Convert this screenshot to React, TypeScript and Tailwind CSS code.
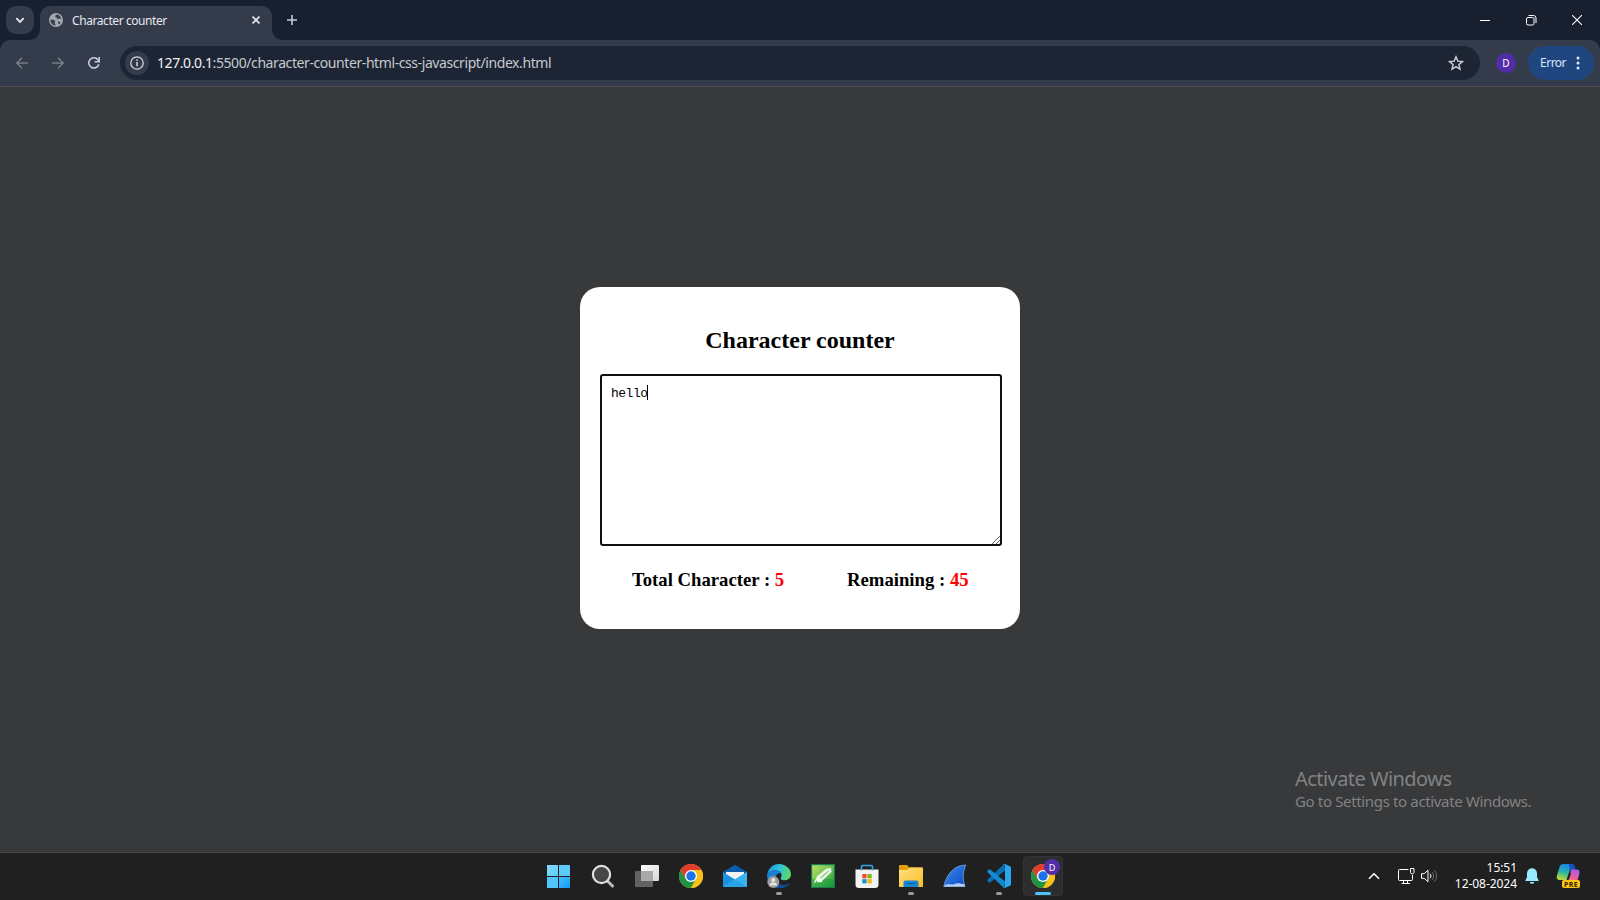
import type { ReactNode } from "react";

function ChromeLogo() {
  return (
    <svg viewBox="0 0 24 24" className="size-6">
      <circle cx="12" cy="12" r="12" fill="#fbc116" />
      <path d="M1.600 6A12 12 0 0 0 12 24L17.200 15 12 12 6.800 15z" fill="#229342" />
      <path d="M1.600 6A12 12 0 0 1 22.400 6H12L6.800 15z" fill="#e33b2e" />
      <path d="M22.400 6A12 12 0 0 1 12 24L17.200 15 12 6z" fill="#fbc116" />
      <circle cx="12" cy="12" r="6" fill="#fff" />
      <circle cx="12" cy="12" r="4.700" fill="#1a73e8" />
    </svg>
  );
}

function WindowsLogo() {
  return (
    <svg viewBox="0 0 24 24" className="size-6">
      <defs>
        <linearGradient id="win" x1="0" y1="0" x2="1" y2="1">
          <stop offset="0" stopColor="#86dcfb" />
          <stop offset="1" stopColor="#5accfa" />
        </linearGradient>
        <linearGradient id="win2" x1="0" y1="0" x2="1" y2="1">
          <stop offset="0" stopColor="#43bdf9" />
          <stop offset="1" stopColor="#149df5" />
        </linearGradient>
      </defs>
      <path d="M0 1h11v11H0z" fill="url(#win)" />
      <path d="M12 1h11v11H12z" fill="#5acbfa" />
      <path d="M0 13h11v11H0z" fill="#50c5f9" />
      <path d="M12 13h11v11H12z" fill="url(#win2)" />
    </svg>
  );
}

function SearchIcon() {
  return (
    <svg viewBox="0 0 24 24" className="size-6">
      <path d="M16.500 17L21.500 22" stroke="#b9bec2" strokeWidth="3" strokeLinecap="round" />
      <circle cx="10.500" cy="10.500" r="8.600" fill="#464646" stroke="#dfe2e4" strokeWidth="2.200" />
    </svg>
  );
}

function TaskViewIcon() {
  return (
    <svg viewBox="0 0 24 24" className="size-6">
      <defs>
        <linearGradient id="tv" x1="0" y1="0" x2="1" y2="1">
          <stop offset="0" stopColor="#ffffff" />
          <stop offset="1" stopColor="#d5d5d5" />
        </linearGradient>
      </defs>
      <rect x="6" y="1" width="18" height="16" rx="1" fill="url(#tv)" />
      <rect x="0" y="7" width="18" height="16" rx="1" fill="#626262" />
      <path d="M6 7h12v10H6z" fill="#a9a9a9" />
    </svg>
  );
}

function MailIcon() {
  return (
    <svg viewBox="0 0 24 24" className="size-6">
      <path d="M0 8L12 .8 24 8v4H0z" fill="#0b5cab" />
      <path d="M3 8h18v8H3z" fill="#f1f3f5" />
      <path d="M0 8l12 7.500L24 8v15H0z" fill="#1a93df" />
      <path d="M24 8v15H0l12-7.500z" fill="#36b5ef" />
      <path d="M12 15.500L24 23H0z" fill="#2aa4e8" />
    </svg>
  );
}

function EdgeIcon() {
  return (
    <svg viewBox="0 0 24 24" className="size-6">
      <defs>
        <linearGradient id="edge" x1="0" y1=".3" x2="1" y2=".5">
          <stop offset="0" stopColor="#1f9de0" />
          <stop offset=".5" stopColor="#31c2dc" />
          <stop offset="1" stopColor="#5fd95d" />
        </linearGradient>
      </defs>
      <path d="M.3 11C1 4.500 6 0 12 0s12 4.500 12 10c0 4-3 6.300-6.600 6.300-3 0-4.400-1.300-3.400-2.800C16 10 13 6.500 8.500 6.500 4.500 6.500 1.200 8.500.3 11z" fill="url(#edge)" />
      <path d="M.1 12C.1 8 4 6.400 8.500 6.400c-3.600 2-4.800 6-3.200 9.600C7 20 12 22 17 21.300c2-.3 3.500-1.200 4.800-1.800.5-.2.800.2.500.6C20 22.800 16.500 24 12.500 24 5.500 24 .1 19 .1 12z" fill="#136cc4" />
      <path d="M.1 12C.1 8 4 6.400 8.500 6.400c2.500 0 4.300 1 5.300 2.500-4 0-6 3.500-4.800 7L5 18z" fill="#1a7fd2" />
      <path d="M8.500 11c-1.400 5 2.500 9.300 8.500 10.100 2.500-.3 4.500-1.300 5-1.400-1.500 2.600-5 4.300-9.500 4.300-5 0-7.500-6-4-13z" fill="#104a93" />
      <circle cx="6.300" cy="18" r="6" fill="#9c9c9c" />
      <circle cx="6.300" cy="16" r="2.100" fill="#e4e4e4" />
      <path d="M2.500 21.500c0-4.500 7.600-4.500 7.600 0z" fill="#e4e4e4" />
    </svg>
  );
}

function GreenPenIcon() {
  return (
    <svg viewBox="0 0 24 24" className="size-6">
      <defs>
        <linearGradient id="pen" x1="0" y1="0" x2="1" y2="1">
          <stop offset="0" stopColor="#c3e36a" />
          <stop offset=".5" stopColor="#6ec04e" />
          <stop offset="1" stopColor="#159c3c" />
        </linearGradient>
      </defs>
      <rect x=".6" y=".6" width="22.800" height="22.800" fill="url(#pen)" stroke="#167c52" strokeWidth="1.200" />
      <path d="M1.500 15h21v7.500h-21z" fill="#119a3e" fillOpacity=".5" />
      <path d="M5.500 12.500L15.500 4.500l4.500-.5.500 4-9.500 9-5 1.500z" fill="#e7f5e3" />
      <path d="M9 14.500l8.500-7.500" stroke="#5fae62" strokeWidth="1" />
      <path d="M3.500 18.500c1-2.500 3-4 4.500-4.500s1.500 1.500 0 2.500 1 1.500 3 .5" stroke="#f4fff0" strokeWidth="1.500" fill="none" />
    </svg>
  );
}

function StoreIcon() {
  return (
    <svg viewBox="0 0 24 24" className="size-6">
      <path d="M.5 5.500h23v15a3.500 3.500 0 0 1-3.500 3.500H4a3.500 3.500 0 0 1-3.500-3.500z" fill="#f2f2f2" />
      <path d="M6.500 6.500V2.700c0-.7.500-1.200 1.200-1.200h8.600c.7 0 1.200.5 1.200 1.200v3.800" fill="none" stroke="#2fa8e6" strokeWidth="1.600" />
      <path d="M7.300 10h4.300v4.300H7.300z" fill="#f04e23" />
      <path d="M12.400 10h4.300v4.300h-4.300z" fill="#7db912" />
      <path d="M7.300 15.100h4.300v4.300H7.300z" fill="#1296dc" />
      <path d="M12.400 15.100h4.300v4.300h-4.300z" fill="#f9b50b" />
    </svg>
  );
}

function ExplorerIcon() {
  return (
    <svg viewBox="0 0 24 24" className="size-6">
      <defs>
        <linearGradient id="fold" x1="0" y1="0" x2="1" y2="1">
          <stop offset="0" stopColor="#ffe083" />
          <stop offset="1" stopColor="#fbbd21" />
        </linearGradient>
      </defs>
      <path d="M0 2c0-.6.400-1 1-1h7l2.500 2.500H23c.6 0 1 .4 1 1V12H0z" fill="#e39f0c" />
      <path d="M0 6h8l3-2.500h12c.6 0 1 .4 1 1V22c0 .6-.4 1-1 1H1c-.6 0-1-.4-1-1z" fill="url(#fold)" />
      <path d="M4.500 23v-4.500c0-1.200.8-2 2-2h11c1.200 0 2 .8 2 2V23z" fill="#1c86d1" />
      <path d="M8 19.500h8" stroke="#0b5a9d" strokeWidth="1.200" strokeLinecap="round" />
    </svg>
  );
}

function WiresharkIcon() {
  return (
    <svg viewBox="0 0 24 24" className="size-6">
      <defs>
        <linearGradient id="shark" x1="0" y1="0" x2="1" y2="1">
          <stop offset="0" stopColor="#3c8ef0" />
          <stop offset="1" stopColor="#0a49c4" />
        </linearGradient>
      </defs>
      <path d="M.8 22.500C3.500 10 11.500 1 22.800 1c-3 7-3.500 14-.8 21.500z" fill="url(#shark)" stroke="#6fa8e6" strokeWidth=".8" />
      <path d="M1.500 21.500c4-2.500 7 0 10-1.500s6-.5 10 .5l.5 2H1z" fill="#b6cff2" />
    </svg>
  );
}

function VsCodeIcon() {
  return (
    <svg viewBox="0 0 24 24" className="size-6">
      <path d="M17.300.2L18 6.500 3.200 18.500c-.4.300-.9.300-1.200 0L.5 17.200c-.4-.4-.4-1 0-1.400L16.500.500z" fill="#0871b5" />
      <path d="M17.300 23.800L18 17.500 3.200 5.500c-.4-.3-.9-.3-1.200 0L.5 6.800c-.4.400-.4 1 0 1.400l16 15.300z" fill="#128bd3" />
      <path d="M17.300.2c.4-.2.800-.2 1.100 0l4.900 2.300c.4.200.7.700.7 1.200v16.600c0 .5-.3 1-.7 1.200l-4.900 2.300c-.3.200-.7.200-1.100 0-.6-.2-.9-.7-.9-1 .5.300 1.600 0 1.600-.9V2.100c0-.9-1.100-1.200-1.600-.9 0-.4.300-.8.900-1z" fill="#2ba7f0" />
    </svg>
  );
}

function CopilotIcon() {
  return (
    <svg viewBox="0 0 26 24" className="h-6 w-[26px]">
      <defs>
        <linearGradient id="cpa" x1=".5" y1="0" x2=".2" y2="1">
          <stop offset="0" stopColor="#1c86e8" />
          <stop offset=".5" stopColor="#27b5a8" />
          <stop offset="1" stopColor="#c9dc30" />
        </linearGradient>
        <linearGradient id="cpb" x1=".7" y1="0" x2=".2" y2="1">
          <stop offset="0" stopColor="#a45df0" />
          <stop offset=".6" stopColor="#ee5f96" />
          <stop offset="1" stopColor="#fb9361" />
        </linearGradient>
      </defs>
      <path d="M7.500 0h8c1.800 0 2.500 1 3 2.500l.7 3h-3c-1.600 0-2.500.8-3 2.500L11 16H4c-2.500 0-3.800-1.500-3.200-4L3.500 3C4.100 1 5.300 0 7.500 0z" fill="url(#cpa)" />
      <path d="M13 0h2.500c1.800 0 2.500 1 3 2.500l.7 3H16c-1 0-1.800.4-2.300 1z" fill="#1651c4" />
      <path d="M16 5.500h4.500c2.500 0 3.600 1.500 2.900 4L22 15c-.6 2-1.700 3-3.500 3H9c2 0 2.800-1 3.300-2.500l2-7C14.700 7 15 6 16 5.500z" fill="url(#cpb)" />
      <path d="M13.200 8.500l1.800 1-2 6h-2.500z" fill="#202020" />
    </svg>
  );
}

function TaskbarItem({ children, running = false }: { children: ReactNode; running?: boolean }) {
  return (
    <div className="relative flex h-10 w-11 items-center justify-center">
      {children}
      {running && <span className="absolute bottom-[1px] left-[19px] h-[3px] w-1.5 rounded-full bg-[#9a9a9a]" />}
    </div>
  );
}

function TabStrip() {
  return (
    <div className="flex h-10 items-start bg-[#182030] pl-1.5">
      <div className="mt-1.5 flex size-7 items-center justify-center rounded-[10px] bg-[#343c4c]">
        <svg viewBox="0 0 10 10" className="size-2.5">
          <path d="M1.300 3.200L5 6.900l3.700-3.700" fill="none" stroke="#e4e7ee" strokeWidth="1.800" />
        </svg>
      </div>
      <div className="relative mt-1.5 ml-1.5 flex h-[34px] w-[232px] items-center rounded-t-[10px] bg-[#343c4c] pl-[9px]">
        <svg viewBox="0 0 10 10" className="absolute bottom-0 -left-2.5 size-2.5">
          <path d="M10 0v10H0A10 10 0 0 0 10 0z" fill="#343c4c" />
        </svg>
        <svg viewBox="0 0 10 10" className="absolute -right-2.5 bottom-0 size-2.5">
          <path d="M0 0v10h10A10 10 0 0 1 0 0z" fill="#343c4c" />
        </svg>
        <svg viewBox="0 0 14 14" className="mb-[6px] size-3.5">
          <circle cx="7" cy="7" r="7" fill="#a4a7ad" />
          <path d="M1.500 6.500c2 .2 4.500.3 4.700 1.500.2 1-.8 1.200-.4 2.200.3.800 1 .8.700 2.300C3.500 12.400 1.200 9.800 1.500 6.500zM8 1.600c-.8.600-2 .8-1.800 1.900.1.900 1.500.4 1.600 1.500.1 1 1.500 1.400 2.200.8.800-.6 1.800-.3 2.300.3C12 4 10.300 2 8 1.600zM9.500 8.500c.9 0 1.600.6 2.200 1L10 11.600c-.8-.8-1.400-2.700-.5-3.100z" fill="#3a4251" />
        </svg>
        <span className="mb-[5px] ml-[9px] w-[180px] text-[12px] leading-4 tracking-[-0.42px] text-[#e6e8ed]">Character counter</span>
        <svg viewBox="0 0 8 8" className="mb-[6px] size-2">
          <path d="M.5.5l7 7M7.500.5l-7 7" stroke="#e4e7ee" strokeWidth="1.600" />
        </svg>
      </div>
      <svg viewBox="0 0 10 10" className="mt-[15px] ml-[15px] size-2.5">
        <path d="M5 0v10M0 5h10" stroke="#c2c9e0" strokeWidth="1.600" />
      </svg>
      <div className="mt-[15px] mr-[18px] ml-auto flex gap-9">
        <svg viewBox="0 0 10 10" className="size-2.5">
          <path d="M0 5.500h10" stroke="#fff" />
        </svg>
        <svg viewBox="0 0 10 10" className="size-2.5 overflow-visible">
          <rect x=".5" y="2.500" width="7.500" height="7.500" rx="1.500" fill="none" stroke="#fff" />
          <path d="M2.500.5h5a2.500 2.500 0 0 1 2.500 2.500v5" fill="none" stroke="#fff" />
        </svg>
        <svg viewBox="0 0 10 10" className="size-2.5">
          <path d="M0 0l10 10M10 0L0 10" stroke="#fff" strokeWidth="1.100" />
        </svg>
      </div>
    </div>
  );
}

function Toolbar() {
  return (
    <div className="bg-[#182030]">
      <div className="flex h-[46px] items-center rounded-t-[10px] bg-[#343c4c] pr-1.5 pl-4">
        <svg viewBox="0 0 12 12" className="size-3">
          <path d="M12 6H1M6 .7L.8 6 6 11.300" fill="none" stroke="#757c8a" strokeWidth="1.500" />
        </svg>
        <svg viewBox="0 0 12 12" className="ml-6 size-3">
          <path d="M0 6h11M6 .7L11.200 6 6 11.300" fill="none" stroke="#757c8a" strokeWidth="1.500" />
        </svg>
        <svg viewBox="0 0 12 12" className="ml-6 size-3">
          <path d="M10.800 7.200A5.100 5.100 0 1 1 9.900 2.800L11 4" fill="none" stroke="#c6cce0" strokeWidth="1.600" />
          <path d="M11.200 0v4.700H6.500" fill="none" stroke="#c6cce0" strokeWidth="1.600" />
        </svg>
        <div className="ml-5 flex h-[34px] w-[1360px] items-center rounded-full bg-[#1d2534] pr-4 pl-[5px]">
          <div className="flex size-6 items-center justify-center rounded-full bg-[#343c4c]">
            <svg viewBox="0 0 14 14" className="size-3.5">
              <circle cx="7" cy="7" r="6.200" fill="none" stroke="#d3d6dd" strokeWidth="1.300" />
              <path d="M7 6v4.300M7 3.600v1.500" stroke="#d3d6dd" strokeWidth="1.500" />
            </svg>
          </div>
          <span className="ml-2 text-[14px] leading-5 tracking-[-0.415px] text-[#c6c9cf]">
            <span className="text-[#f0f1f4]">127.0.0.1</span>:5500/character-counter-html-css-javascript/index.html
          </span>
          <svg viewBox="0 0 16 16" className="ml-auto size-4">
            <path d="M8 1.800l1.800 4.300 4.700.4-3.600 3.100 1.100 4.600L8 11.700l-4 2.500 1.100-4.600L1.500 6.500l4.700-.4z" fill="none" stroke="#ccd0da" strokeWidth="1.400" />
          </svg>
        </div>
        <div className="ml-4 flex size-5 items-center justify-center rounded-full bg-[#512da8] text-[10px] leading-none text-white">D</div>
        <div className="ml-3 flex h-[34px] w-[66px] items-center rounded-full bg-[#1f467f] pl-3">
          <span className="text-[12px] leading-4 tracking-[-0.5px] text-[#dde7fb]">Error</span>
          <svg viewBox="0 0 4 14" className="mr-[14px] ml-auto h-3.5 w-1">
            <circle cx="2" cy="2" r="1.500" fill="#dde7fb" />
            <circle cx="2" cy="7" r="1.500" fill="#dde7fb" />
            <circle cx="2" cy="12" r="1.500" fill="#dde7fb" />
          </svg>
        </div>
      </div>
    </div>
  );
}

function CounterCard() {
  return (
    <section className="h-[342px] w-[440px] rounded-[20px] bg-white px-5 pt-10 font-['Liberation_Serif',serif] font-bold text-black">
      <h2 className="text-center text-[24px] leading-[27px]">Character counter</h2>
      <div className="relative mt-5 flex h-[172px] w-[402px] rounded-[3px] border-2 border-[#101010] pt-[9px] pl-[9px] font-['Liberation_Mono',monospace] font-normal">
        <span className="w-9 pt-px text-[13px] leading-[15px] tracking-[-0.5px]">hello</span>
        <span className="h-[15px] w-px bg-black" />
        <svg viewBox="0 0 10 10" className="absolute right-0 bottom-0 size-2.5">
          <path d="M2 10L10 2M6 10l4-4" stroke="#555" strokeWidth=".9" />
        </svg>
      </div>
      <div className="mt-[23px] flex text-[18.72px] leading-[22px]">
        <p className="ml-8 w-[215px]">
          Total Character : <span className="text-[#ff0000]">5</span>
        </p>
        <p>
          Remaining : <span className="text-[#ff0000]">45</span>
        </p>
      </div>
    </section>
  );
}

function Taskbar() {
  return (
    <footer className="flex h-12 items-start border-t border-[#454545] bg-[#202020] pt-[3px] pl-[537px]">
      <TaskbarItem><WindowsLogo /></TaskbarItem>
      <TaskbarItem><SearchIcon /></TaskbarItem>
      <TaskbarItem><TaskViewIcon /></TaskbarItem>
      <TaskbarItem><ChromeLogo /></TaskbarItem>
      <TaskbarItem><MailIcon /></TaskbarItem>
      <TaskbarItem running><EdgeIcon /></TaskbarItem>
      <TaskbarItem><GreenPenIcon /></TaskbarItem>
      <TaskbarItem><StoreIcon /></TaskbarItem>
      <TaskbarItem running><ExplorerIcon /></TaskbarItem>
      <TaskbarItem><WiresharkIcon /></TaskbarItem>
      <TaskbarItem running><VsCodeIcon /></TaskbarItem>
      <div className="relative mx-0.5 flex size-10 items-center justify-center rounded-[4px] border border-[#333333] bg-[#2d2d2d]">
        <ChromeLogo />
        <span className="absolute top-[2px] right-[2px] flex size-4 items-center justify-center rounded-full bg-[#512da8] text-[9px] leading-none text-white">D</span>
        <span className="absolute bottom-0 left-[11px] h-[3px] w-4 rounded-full bg-[#4cc2ff]" />
      </div>
      <div className="mr-[18px] ml-auto flex h-10 items-center">
        <svg viewBox="0 0 12 8" className="h-2 w-3">
          <path d="M1 6.800L6 1.700l5 5.100" fill="none" stroke="#fff" strokeWidth="1.500" />
        </svg>
        <svg viewBox="0 0 17 17" className="ml-[18px] size-[17px]">
          <path d="M10.500 1.500H1.500a1 1 0 0 0-1 1v9a1 1 0 0 0 1 1h12a1 1 0 0 0 1-1V7M5.500 12.500v3M9.500 12.500v3M3.500 15.500h8.500M12.500.5h3.500v4a1.800 1.800 0 0 1-3.500 0z" fill="none" stroke="#fff" />
        </svg>
        <svg viewBox="0 0 17 14" className="ml-1.5 h-3.5 w-[17px]">
          <path d="M.5 4.700h2.700L7 1.200v11.600L3.200 9.300H.5z" fill="none" stroke="#fff" />
          <path d="M9 4.800a3 3 0 0 1 0 4.400" fill="none" stroke="#fff" />
          <path d="M11 3a5.500 5.500 0 0 1 0 8M13 1a8 8 0 0 1 0 12" fill="none" stroke="#6c6c6c" />
        </svg>
        <div className="ml-4 w-[63px] text-right text-[12px] leading-4 tracking-[-0.05px] whitespace-nowrap text-white">
          <div>15:51</div>
          <div>12-08-2024</div>
        </div>
        <svg viewBox="0 0 14 16" className="ml-2 h-4 w-3.5">
          <path d="M7 .3a5 5 0 0 1 5 5v3.900l1.600 3c.2.500-.1.900-.6.900H1c-.5 0-.8-.4-.6-.9L2 9.200V5.300a5 5 0 0 1 5-5zM4.800 13.900h4.400a2.200 1.900 0 0 1-4.400 0z" fill="#9aebff" />
        </svg>
        <div className="relative ml-[17px] h-6 w-[26px]">
          <CopilotIcon />
          <span className="absolute right-[2px] bottom-0 flex h-2 w-[18px] items-center justify-center rounded-[2px] bg-[#fcc419] text-[7px] leading-none font-bold tracking-[0.3px] text-[#2a2100]">PRE</span>
        </div>
      </div>
    </footer>
  );
}

export default function App() {
  return (
    <div className="flex h-[900px] w-[1600px] flex-col overflow-hidden bg-[#38393b] font-['Noto_Sans','Open_Sans',sans-serif]">
      <TabStrip />
      <Toolbar />
      <main className="flex flex-1 flex-col items-center border-t border-[#4b4d50] pt-[200px]">
        <CounterCard />
        <div className="mt-auto mb-[41px] ml-[1295px] w-[305px] self-start text-[#818283]">
          <p className="pt-0.5 text-[20px] leading-6 tracking-[-0.55px]">Activate Windows</p>
          <p className="text-[15px] leading-5 tracking-[-0.35px]">Go to Settings to activate Windows.</p>
        </div>
      </main>
      <Taskbar />
    </div>
  );
}
